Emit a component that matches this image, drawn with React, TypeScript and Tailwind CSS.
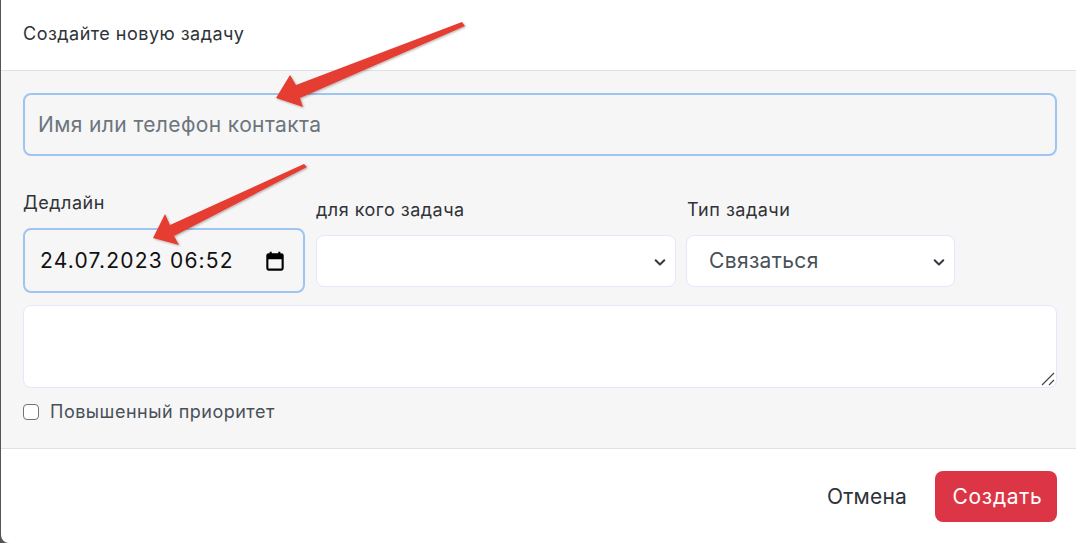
import React from "react";

const Chevron = () => (
  <svg viewBox="0 0 16 16" className="absolute right-[7px] top-[18px] w-4 h-4 pointer-events-none" fill="none" stroke="#343a40" strokeLinecap="round" strokeLinejoin="round">
    <path d="M2 5l6 6 6-6" transform="translate(2.2 2.6) scale(0.72)" strokeWidth="2.8" />
  </svg>
);

export default function App() {
  return (
    <div className="w-[1076px] h-[543px] bg-[#555] overflow-hidden relative font-['Inter',sans-serif]">
      <div className="ml-px w-[1075px] h-[543px] bg-white rounded-bl-[8px] overflow-hidden flex flex-col">
        <div className="h-[70px] px-[22px] pb-[3px] flex items-center text-[18px] tracking-[0.48px] text-[#2f3337]">Создайте новую задачу</div>
        <div className="h-[379px] bg-[#f6f6f7] border-y border-[#dee2e6] px-[22px] pt-[22px]">
          <input
            readOnly
            placeholder="Имя или телефон контакта"
            className="block w-[1034px] h-[63px] rounded-[8px] border-2 border-[#9ec5f2] bg-[#f6f6f7] pl-[13px] pr-[14px] text-[21px] tracking-[0.38px] leading-none outline-none placeholder:text-[#6c757d]"
          />
          <div className="flex mt-[35px] items-start">
            <div className="w-[282px]">
              <div className="text-[18px] tracking-[0.5px] leading-[24px] text-[#2f3337] h-[37px]">Дедлайн</div>
              <div className="h-[65px] rounded-[8px] border-2 border-[#9ec5f2] bg-[#f6f6f7] flex items-center justify-between pl-[15px] pr-[17px] text-[21px] text-[#111]">
                <span className="tracking-[1.2px]">24.07.2023 06:52</span>
                <svg viewBox="0 0 24 24" className="w-[22px] h-[22px]" fill="#000">
                  <path d="M19 3.5h-1.2V2h-2.2v1.5H8.4V2H6.2v1.5H5A2.5 2.5 0 0 0 2.5 6v14A2.5 2.5 0 0 0 5 22.5h14a2.5 2.5 0 0 0 2.5-2.5V6A2.5 2.5 0 0 0 19 3.5zm.2 16.8H4.8V10h14.4v10.3z" />
                </svg>
              </div>
            </div>
            <div className="w-[360px] ml-[11px] mt-[7px]">
              <div className="text-[18px] tracking-[0.5px] leading-[24px] text-[#2f3337] h-[37px]">для кого задача</div>
              <div className="relative h-[52px] rounded-[8px] border border-[#e6e6ff] bg-white"><Chevron /></div>
            </div>
            <div className="w-[269px] ml-[10px] mt-[7px]">
              <div className="text-[18px] tracking-[0.5px] leading-[24px] text-[#2f3337] h-[37px] pl-px">Тип задачи</div>
              <div className="relative h-[52px] rounded-[8px] border border-[#e6e6ff] bg-white flex items-center pl-[22px] text-[21px] tracking-[0.35px] text-[#495057]">
                Связаться
                <Chevron />
              </div>
            </div>
          </div>
          <div className="relative w-[1034px] h-[83px] mt-[12px]">
            <textarea readOnly className="block w-full h-full resize-none rounded-[8px] border border-[#e6e6ff] bg-white outline-none" />
            <svg viewBox="0 0 14 14" className="absolute right-[2px] bottom-[2px] w-[14px] h-[14px]" stroke="#444" strokeWidth="1.2" fill="none">
              <path d="M1 13L13 1M8 13L13 8" />
            </svg>
          </div>
          <div className="flex items-center mt-[11px] h-[24px]">
            <span className="w-[16px] h-[16px] mt-[2px] rounded-[4px] border border-[#6c757d] bg-white" />
            <span className="ml-[11px] text-[18px] tracking-[0.5px] text-[#495057]">Повышенный приоритет</span>
          </div>
        </div>
        <div className="flex-1 flex items-start justify-end pt-[22px] pr-[19px]">
          <span className="h-[51px] flex items-center text-[21px] tracking-[0.2px] text-[#2f3337] mr-[28px]">Отмена</span>
          <span className="w-[122px] h-[51px] rounded-[8px] bg-[#dc3545] text-white text-[21px] tracking-[0.7px] pl-[3px] flex items-center justify-center">Создать</span>
        </div>
      </div>
      <svg className="absolute inset-0 pointer-events-none" width="1076" height="543" viewBox="0 0 1076 543">
        <defs>
          <filter id="s" x="-10%" y="-10%" width="120%" height="120%">
            <feDropShadow dx="1" dy="1" stdDeviation="1" floodColor="#000" floodOpacity="0.3" />
          </filter>
        </defs>
        <path filter="url(#s)" fill="#e53c30" d="M462 22 L465 26 L300 98 L303 107 L276 98 L290 75 L296 85 Z" />
        <path filter="url(#s)" fill="#e53c30" d="M304 164 L307 167 L174 236 L179 245 L153 238 L165 214 L170 225 Z" />
      </svg>
    </div>
  );
}
